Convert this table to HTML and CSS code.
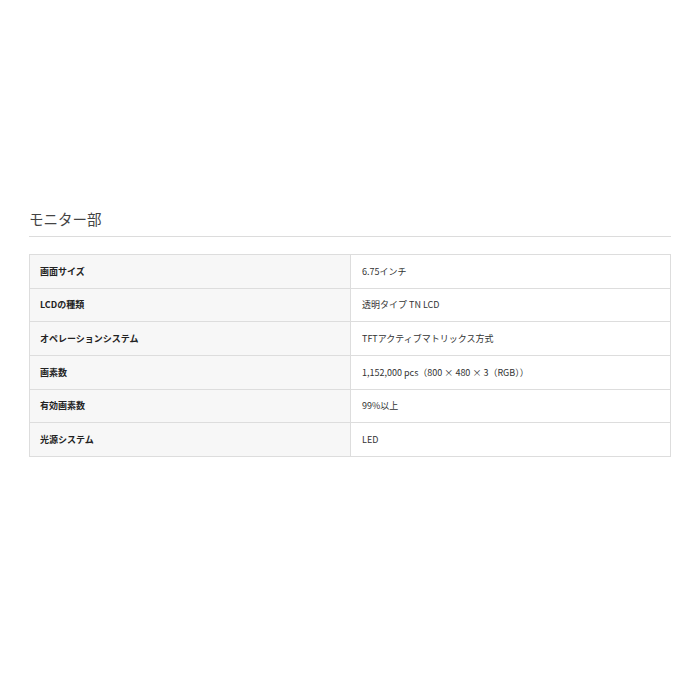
FILE: index.html
```html
<!DOCTYPE html>
<html lang="ja">
<head>
<meta charset="utf-8">
<link rel="stylesheet" href="styles.css">
</head>
<body>
<div class="page">
  <h2 class="title">モニター部</h2>
  <table class="spec">
    <tr><th>画面サイズ</th><td>6.75インチ</td></tr>
    <tr><th>LCDの種類</th><td>透明タイプ TN LCD</td></tr>
    <tr><th>オペレーションシステム</th><td>TFTアクティブマトリックス方式</td></tr>
    <tr><th>画素数</th><td>1,152,000 pcs（800 × 480 × 3（RGB））</td></tr>
    <tr><th>有効画素数</th><td>99%以上</td></tr>
    <tr><th>光源システム</th><td>LED</td></tr>
  </table>
</div>
</body>
</html>
```
FILE: styles.css
```css
html, body {
  margin: 0;
  padding: 0;
  background: #fff;
}
.page {
  width: 642px;
  margin-left: 29px;
  padding-top: 208px;
  font-family: "Noto Sans CJK JP", "Noto Sans", sans-serif;
  color: #333;
}
.title {
  margin: 0;
  font-size: 14.5px;
  font-weight: normal;
  line-height: 22px;
  color: #444;
  padding-bottom: 6px;
  border-bottom: 1px solid #dcdcdc;
}
.spec {
  margin-top: 17px;
  width: 642px;
  border-collapse: collapse;
  font-size: 9px;
}
.spec th, .spec td {
  border: 1px solid #ddd;
  height: 33.67px;
  padding: 0 0 0 10px;
  text-align: left;
  vertical-align: middle;
  box-sizing: border-box;
}
.spec th {
  width: 321px;
  background: #f7f7f7;
  font-weight: bold;
  color: #222;
}
.spec td {
  padding-left: 11px;
  color: #333;
}
```
